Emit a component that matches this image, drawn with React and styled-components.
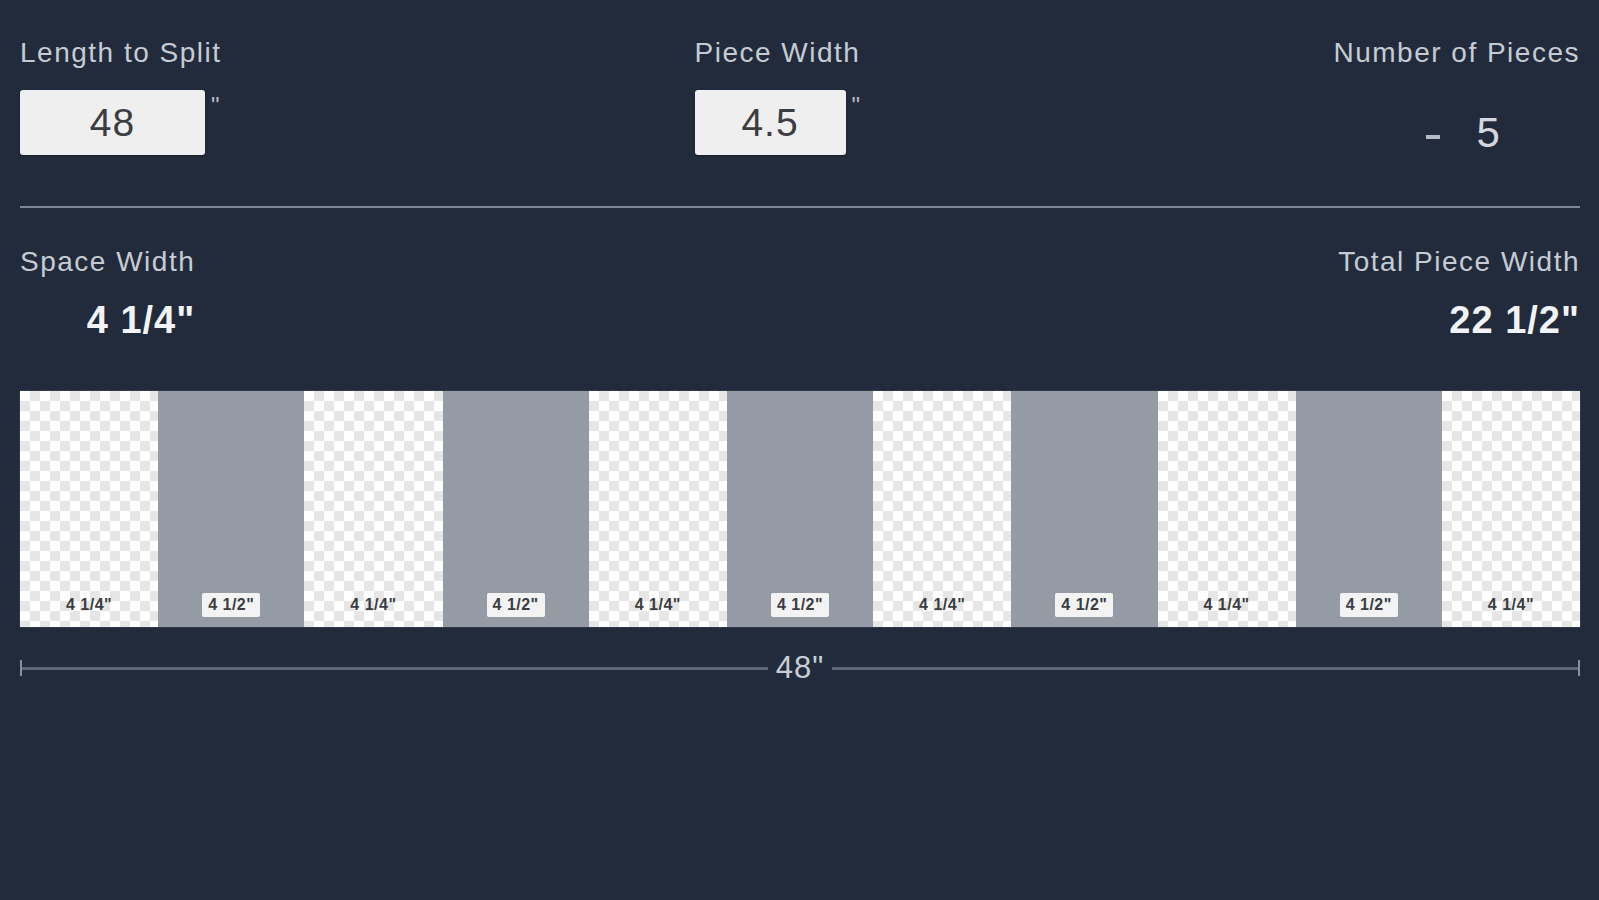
import React from "react";
import styled, { createGlobalStyle } from "styled-components";

const Global = createGlobalStyle`
  html, body { margin: 0; padding: 0; background: #222b3b; }
  body { font-family: "Liberation Sans", Arial, sans-serif; }
  * { box-sizing: border-box; }
`;

const Page = styled.div`
  min-height: 900px;
  background: #222b3b;
  padding: 37px 19px 0 20px;
`;

const TopRow = styled.div`
  display: flex;
  justify-content: space-between;
  align-items: flex-start;
`;

const Field = styled.div`
  display: flex;
  flex-direction: column;
  align-items: ${(p) => (p.$right ? "flex-end" : "flex-start")};
`;

const Label = styled.div`
  font-size: 28px;
  line-height: 32px;
  letter-spacing: 1.5px;
  color: #c6cbd3;
  white-space: nowrap;
`;

const InputRow = styled.div`
  display: flex;
  align-items: flex-start;
  margin-top: 21px;
`;

const Input = styled.div`
  width: ${(p) => p.$w}px;
  height: 65px;
  background: #efefef;
  border-radius: 3px;
  box-shadow: 0 1px 2px rgba(0, 0, 0, 0.35);
  display: flex;
  align-items: center;
  justify-content: center;
  font-size: 39px;
  letter-spacing: 1px;
  color: #3b3d42;
`;

const Inch = styled.span`
  font-size: 24px;
  line-height: 20px;
  color: #b4bac4;
  margin: 6px 0 0 6px;
`;

const Stepper = styled.div`
  display: flex;
  align-items: center;
  align-self: stretch;
  padding-left: 93px;
  margin-top: 40px;
  gap: 36px;
`;

const Minus = styled.span`
  display: block;
  width: 14px;
  height: 4px;
  background: #b6bcc6;
  margin-top: 8px;
`;

const Count = styled.span`
  font-size: 42px;
  line-height: 48px;
  color: #d4d8de;
`;

const Divider = styled.div`
  height: 2px;
  background: #7d8697;
  margin-top: 49px;
`;

const StatsRow = styled.div`
  display: flex;
  justify-content: space-between;
  margin-top: 38px;
`;

const Stat = styled.div`
  display: flex;
  flex-direction: column;
  align-items: flex-end;
`;

const Value = styled.div`
  font-size: 38px;
  line-height: 42px;
  font-weight: 700;
  letter-spacing: 1px;
  color: #f1f3f6;
  margin-top: 21px;
`;

const Bar = styled.div`
  display: flex;
  height: 236px;
  margin-top: 50px;
  box-shadow: 0 0 1px rgba(255, 255, 255, 0.4);
`;

const Segment = styled.div`
  flex: ${(p) => p.$grow} 1 0;
  display: flex;
  align-items: flex-end;
  justify-content: center;
  padding-bottom: 10px;
  background-color: ${(p) => (p.$piece ? "#959ba5" : "#ffffff")};
  background-image: ${(p) =>
    p.$piece
      ? "none"
      : "linear-gradient(45deg, #e6e6e6 25%, transparent 25%, transparent 75%, #e6e6e6 75%), linear-gradient(45deg, #e6e6e6 25%, transparent 25%, transparent 75%, #e6e6e6 75%)"};
  background-size: 20px 20px;
  background-position: 0 0, 10px 10px;
`;

const SegLabel = styled.span`
  font-size: 16px;
  font-weight: 700;
  letter-spacing: 0.5px;
  color: #3a3d42;
  line-height: 24px;
  padding: 0 6px;
  border-radius: 2px;
  background: ${(p) => (p.$piece ? "#f3f3f3" : "transparent")};
`;

const Dimension = styled.div`
  display: flex;
  align-items: center;
  height: 30px;
  margin-top: 26px;
`;

const Tick = styled.div`
  width: 2px;
  height: 16px;
  background: #8790a0;
`;

const DimLine = styled.div`
  flex: 1;
  height: 3px;
  background: #5f6879;
`;

const DimText = styled.span`
  font-size: 31px;
  letter-spacing: 1px;
  color: #c8cdd5;
  padding: 0 8px;
`;

const segments = [];
for (let i = 0; i < 11; i++) {
  const piece = i % 2 === 1;
  segments.push({ piece, grow: piece ? 4.5 : 4.25, text: piece ? '4 1/2"' : '4 1/4"' });
}

export default function App() {
  return (
    <>
      <Global />
      <Page>
        <TopRow>
          <Field>
            <Label>Length to Split</Label>
            <InputRow>
              <Input $w={185}>48</Input>
              <Inch>"</Inch>
            </InputRow>
          </Field>
          <Field>
            <Label>Piece Width</Label>
            <InputRow>
              <Input $w={151}>4.5</Input>
              <Inch>"</Inch>
            </InputRow>
          </Field>
          <Field $right>
            <Label>Number of Pieces</Label>
            <Stepper>
              <Minus />
              <Count>5</Count>
            </Stepper>
          </Field>
        </TopRow>
        <Divider />
        <StatsRow>
          <Stat>
            <Label>Space Width</Label>
            <Value>4 1/4"</Value>
          </Stat>
          <Stat>
            <Label>Total Piece Width</Label>
            <Value>22 1/2"</Value>
          </Stat>
        </StatsRow>
        <Bar>
          {segments.map((s, i) => (
            <Segment key={i} $piece={s.piece} $grow={s.grow}>
              <SegLabel $piece={s.piece}>{s.text}</SegLabel>
            </Segment>
          ))}
        </Bar>
        <Dimension>
          <Tick />
          <DimLine />
          <DimText>48"</DimText>
          <DimLine />
          <Tick />
        </Dimension>
      </Page>
    </>
  );
}
